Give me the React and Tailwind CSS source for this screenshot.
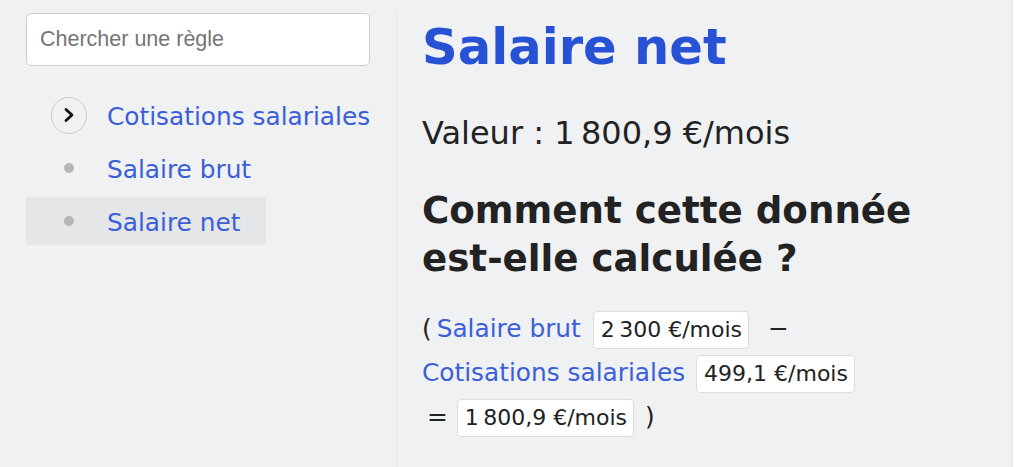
import React from "react";

const rules = [
  { name: "Cotisations salariales", kind: "folder" },
  { name: "Salaire brut", kind: "leaf" },
  { name: "Salaire net", kind: "leaf", active: true },
];

const Value = ({ children }) => (
  <span className="inline-block whitespace-nowrap rounded-[4px] border border-[#dcdcdc] bg-white pl-[7px] pr-[6px] py-[4px] text-[22px] leading-[28px] text-[#222]">
    {children}
  </span>
);

const App = () => {
  return (
    <div className="flex h-[467px] w-full overflow-hidden bg-[#f0f1f3] font-['DejaVu_Sans',sans-serif] text-[#222]">
      {/* Sidebar */}
      <aside className="mt-[13px] w-[397px] shrink-0 border-r border-[#e2e3e5] pl-[26px] pr-[26px]">
        <input
          type="text"
          placeholder="Chercher une règle"
          className="h-[53px] w-full rounded-[5px] border border-[#cfcfcf] bg-white px-[13px] font-['Liberation_Sans',sans-serif] text-[21.5px] placeholder:text-[#757575] outline-none"
        />
        <ul className="mt-[25px] flex flex-col gap-[5px]">
          {rules.map((rule) => (
            <li
              key={rule.name}
              className={`flex h-[48px] w-fit items-center whitespace-nowrap rounded-[3px] pl-[25px] pr-[26px] ${rule.active ? "bg-[#e5e6e8]" : ""}`}
            >
              <span className="flex h-[36px] w-[36px] shrink-0 items-center justify-center">
                {rule.kind === "folder" ? (
                  <span className="flex h-[37px] w-[37px] items-center justify-center rounded-full border border-[#c9c9c9]">
                    <svg width="14" height="16" viewBox="0 0 14 16" fill="none">
                      <path d="M4 2.5 L10 8 L4 13.5" stroke="#111" strokeWidth="2.8" strokeLinecap="round" strokeLinejoin="round" />
                    </svg>
                  </span>
                ) : (
                  <span className="h-[10px] w-[10px] rounded-full bg-[#b5b5b5]" />
                )}
              </span>
              <span className="ml-[20px] pt-[4px] text-[24.8px] leading-none text-[#3a5fd9]">{rule.name}</span>
            </li>
          ))}
        </ul>
      </aside>

      {/* Main content */}
      <main className="min-w-0 flex-1 pl-[25px] pt-[17px]">
        <h1 className="text-[49.6px] font-bold leading-[60px] text-[#2852d6]">Salaire net</h1>
        <p className="mt-[38px] text-[32px] leading-[36px]">Valeur : 1{"\u202F"}800,9 €/mois</p>
        <h2 className="mt-[35px] w-[560px] text-[37.2px] font-bold leading-[48px]">
          Comment cette donnée est-elle calculée ?
        </h2>
        <div className="mt-[25px] w-[470px] whitespace-nowrap text-[24.8px] leading-[44px]">
          <div className="flex items-center">
            <span>(</span>
            <span className="ml-[5px] text-[#3a5fd9]">Salaire brut</span>
            <span className="ml-[12px]"><Value>2{"\u202F"}300 €/mois</Value></span>
            <span className="ml-[19px]">−</span>
          </div>
          <div className="flex items-center">
            <span className="text-[#3a5fd9]">Cotisations salariales</span>
            <span className="ml-[11px]"><Value>499,1 €/mois</Value></span>
          </div>
          <div className="flex items-center">
            <span className="ml-[5px]">=</span>
            <span className="ml-[9px]"><Value>1{"\u202F"}800,9 €/mois</Value></span>
            <span className="ml-[11px]">)</span>
          </div>
        </div>
      </main>

      {/* Right gutter */}
      <div className="w-[20px] shrink-0 bg-white shadow-[-2px_0_4px_rgba(0,0,0,0.04)]" />
    </div>
  );
};

export default App;
